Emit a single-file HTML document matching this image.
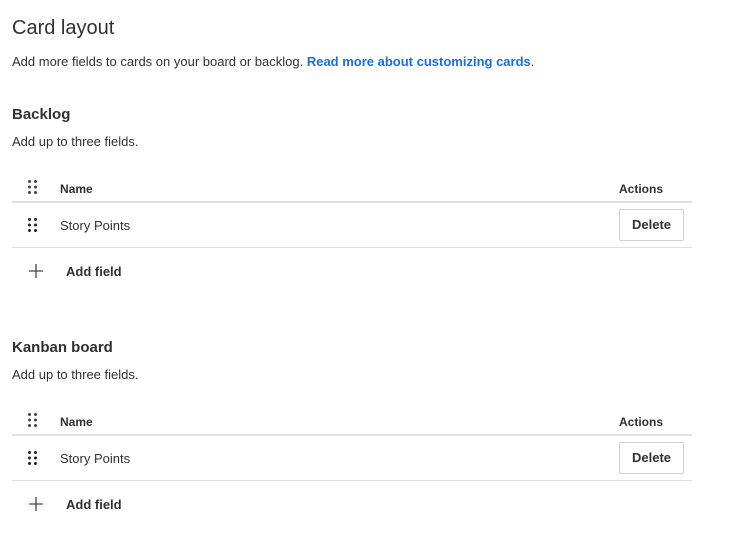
<!DOCTYPE html>
<html><head><style>
body{margin:0;width:749px;height:547px;background:#fff;font-family:"Liberation Sans",sans-serif;color:#323130;position:relative;overflow:hidden}
.a{position:absolute;white-space:nowrap}
.h1{font-size:20px;left:12px;top:17px}
.p{font-size:13px;left:12px}
.h2{font-size:15px;font-weight:bold;left:12px}
.th{font-size:12px;font-weight:bold}
.line{position:absolute;left:12px;width:680px;background:#e1dfdd}
.btn{position:absolute;left:619px;width:65px;height:32px;border:1px solid #d0d0d0;border-radius:2px;font-size:13px;font-weight:bold;text-align:center;line-height:30px;box-sizing:border-box}
.dots{position:absolute;left:28px;width:9px;height:14px}
</style></head><body>
<div class="a h1">Card layout</div>
<div class="a p" style="top:54px">Add more fields to cards on your board or backlog. <span style="color:#1a6fd8;font-weight:bold">Read more about customizing cards</span>.</div>

<div>
<div class="a h2" style="top:106px">Backlog</div>
<div class="a p" style="top:134px">Add up to three fields.</div>
<svg class="dots" style="top:180px" viewBox="0 0 9 14"><g fill="#444"><circle cx="1.5" cy="1.5" r="1.5"/><circle cx="7.5" cy="1.5" r="1.5"/><circle cx="1.5" cy="7" r="1.5"/><circle cx="7.5" cy="7" r="1.5"/><circle cx="1.5" cy="12.5" r="1.5"/><circle cx="7.5" cy="12.5" r="1.5"/></g></svg>
<div class="a th" style="left:60px;top:182px">Name</div>
<div class="a th" style="left:619px;top:182px">Actions</div>
<div class="line" style="top:201px;height:2px"></div>
<svg class="dots" style="top:218px" viewBox="0 0 9 14"><g fill="#222"><circle cx="1.5" cy="1.5" r="1.5"/><circle cx="7.5" cy="1.5" r="1.5"/><circle cx="1.5" cy="7" r="1.5"/><circle cx="7.5" cy="7" r="1.5"/><circle cx="1.5" cy="12.5" r="1.5"/><circle cx="7.5" cy="12.5" r="1.5"/></g></svg>
<div class="a" style="left:60px;top:218px;font-size:13px">Story Points</div>
<div class="btn" style="top:209px">Delete</div>
<div class="line" style="top:247px;height:1px"></div>
<svg class="a" style="left:28px;top:263px" width="16" height="16"><path d="M8 1v14M1 8h14" stroke="#444" stroke-width="1.3"/></svg>
<div class="a" style="left:66px;top:264px;font-size:13px;font-weight:bold">Add field</div>
</div>

<div style="position:absolute;left:0;top:233px;width:749px;height:300px">
<div class="a h2" style="top:106px">Kanban board</div>
<div class="a p" style="top:134px">Add up to three fields.</div>
<svg class="dots" style="top:180px" viewBox="0 0 9 14"><g fill="#444"><circle cx="1.5" cy="1.5" r="1.5"/><circle cx="7.5" cy="1.5" r="1.5"/><circle cx="1.5" cy="7" r="1.5"/><circle cx="7.5" cy="7" r="1.5"/><circle cx="1.5" cy="12.5" r="1.5"/><circle cx="7.5" cy="12.5" r="1.5"/></g></svg>
<div class="a th" style="left:60px;top:182px">Name</div>
<div class="a th" style="left:619px;top:182px">Actions</div>
<div class="line" style="top:201px;height:2px"></div>
<svg class="dots" style="top:218px" viewBox="0 0 9 14"><g fill="#222"><circle cx="1.5" cy="1.5" r="1.5"/><circle cx="7.5" cy="1.5" r="1.5"/><circle cx="1.5" cy="7" r="1.5"/><circle cx="7.5" cy="7" r="1.5"/><circle cx="1.5" cy="12.5" r="1.5"/><circle cx="7.5" cy="12.5" r="1.5"/></g></svg>
<div class="a" style="left:60px;top:218px;font-size:13px">Story Points</div>
<div class="btn" style="top:209px">Delete</div>
<div class="line" style="top:247px;height:1px"></div>
<svg class="a" style="left:28px;top:263px" width="16" height="16"><path d="M8 1v14M1 8h14" stroke="#444" stroke-width="1.3"/></svg>
<div class="a" style="left:66px;top:264px;font-size:13px;font-weight:bold">Add field</div>
</div>
</body></html>
